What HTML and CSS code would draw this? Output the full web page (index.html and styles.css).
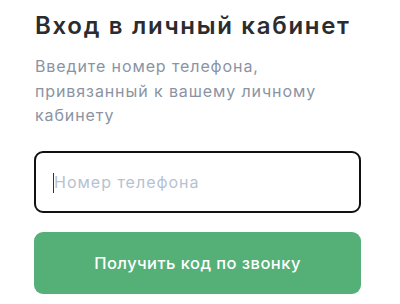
FILE: index.html
```html
<!DOCTYPE html>
<html lang="ru">

<head>
    <meta charset="UTF-8">
    <meta name="viewport" content="width=device-width, initial-scale=1.0">
    <title>Вход в личный кабинет</title>
    <link rel="stylesheet" href="styles.css">
</head>

<body>
    <div class="login">
        <h1 class="login-title">Вход в личный кабинет</h1>
        <p class="login-text">Введите номер телефона, привязанный к вашему личному кабинету</p>

        <!-- Форма входа -->
        <form class="login-form">
            <div class="field">
                <span class="caret"></span>
                <input class="field-input" type="tel" placeholder="Номер телефона">
            </div>
            <button class="btn-call" type="button">Получить код по звонку</button>
        </form>
    </div>
</body>

</html>
```

FILE: styles.css
```css
/* Общие стили */

body {
    font-family: Inter, 'Noto Sans', sans-serif;
    margin: 0;
    padding: 0;
    background-color: #fff;
}

.login {
    width: 327px;
    padding: 10px 0 0 34px;
}

.login-title {
    margin: 0 0 0 1px;
    font-size: 24px;
    font-weight: 600;
    line-height: 32px;
    letter-spacing: 1.7px;
    color: #2a2c30;
    white-space: nowrap;
}

.login-text {
    margin: 12px 0 0 1px;
    font-size: 16px;
    line-height: 24.5px;
    letter-spacing: 0.9px;
    color: #8b93a3;
    width: 320px;
}

.login-form {
    margin-top: 23px;
    display: flex;
    flex-direction: column;
    gap: 19px;
}

/* Поле ввода */

.field {
    position: relative;
    height: 62px;
    box-sizing: border-box;
    border: 2px solid #111;
    border-radius: 9px;
    display: flex;
    align-items: center;
}

.field-input {
    border: none;
    outline: none;
    background: transparent;
    width: 100%;
    padding: 0 0 0 18px;
    font-family: inherit;
    font-size: 16px;
    letter-spacing: 1px;
    color: #26282c;
}

.field-input::placeholder {
    color: #b6c2d2;
}

.caret {
    position: absolute;
    left: 17px;
    top: 20px;
    width: 1px;
    height: 20px;
    background-color: #333;
}

/* Кнопка */

.btn-call {
    height: 62px;
    border: none;
    border-radius: 9px;
    background-color: #55b077;
    color: #fff;
    font-family: inherit;
    font-size: 16.5px;
    font-weight: 500;
    letter-spacing: 0.45px;
}
```
